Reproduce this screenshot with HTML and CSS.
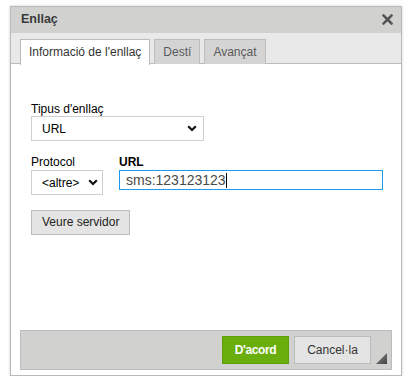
FILE: index.html
```html
<!DOCTYPE html>
<html lang="ca">
<head>
<meta charset="utf-8">
<title>Enllaç</title>
<link rel="stylesheet" href="styles.css">
</head>
<body>
<div class="dialog">
  <div class="title">
    <span class="title-text">Enllaç</span>
    <svg class="close" width="11" height="11" viewBox="0 0 11 11" aria-label="Tanca">
      <path d="M1.5 1.5 L9.5 9.5 M9.5 1.5 L1.5 9.5" stroke="#5c5c5c" stroke-width="2.6" stroke-linecap="square"/>
      <path d="M2.5 2.5 L8.5 8.5 M8.5 2.5 L2.5 8.5" stroke="#444" stroke-width="1"/>
    </svg>
  </div>
  <div class="tabs">
    <div class="tab active">Informació de l'enllaç</div>
    <div class="tab">Destí</div>
    <div class="tab">Avançat</div>
  </div>
  <div class="content">
    <div class="field">
      <label class="label">Tipus d'enllaç</label>
      <div class="select wide">
        <span class="select-text">URL</span>
        <svg class="chev" width="10" height="7" viewBox="0 0 10 7"><path d="M1.2 1.2 L5 5 L8.8 1.2" fill="none" stroke="#111" stroke-width="2.2"/></svg>
      </div>
    </div>
    <div class="row">
      <div class="field">
        <label class="label">Protocol</label>
        <div class="select narrow">
          <span class="select-text">&lt;altre&gt;</span>
          <svg class="chev" width="10" height="7" viewBox="0 0 10 7"><path d="M1.2 1.2 L5 5 L8.8 1.2" fill="none" stroke="#111" stroke-width="2.2"/></svg>
        </div>
      </div>
      <div class="field url">
        <label class="label bold">URL</label>
        <div class="input"><span class="input-text">sms:123123123</span><span class="caret"></span></div>
      </div>
    </div>
    <div class="btn-browse">Veure servidor</div>
  </div>
  <div class="footer">
    <div class="btn ok">D'acord</div>
    <div class="btn cancel">Cancel·la</div>
    <svg class="grip" width="11" height="11" viewBox="0 0 11 11">
      <defs><linearGradient id="g" x1="0" y1="0" x2="1" y2="1"><stop offset="0" stop-color="#8a8a8a"/><stop offset="1" stop-color="#444"/></linearGradient></defs>
      <polygon points="11,0 11,11 0,11" fill="url(#g)"/>
    </svg>
  </div>
</div>
</body>
</html>
```
FILE: styles.css
```css
html, body {
  margin: 0;
  padding: 0;
  background: #fff;
}
body {
  font-family: "Liberation Sans", Arial, sans-serif;
  font-size: 12px;
  color: #333;
}
.dialog {
  margin: 6px 0 0 10px;
  width: 390px;
  height: 368px;
  border: 1px solid #b9b9b9;
  box-shadow: 0 0 3px rgba(0, 0, 0, 0.18);
  display: flex;
  flex-direction: column;
  background: #fff;
}
.title {
  height: 26px;
  flex: none;
  background: #d1d2cf;
  display: flex;
  align-items: center;
  justify-content: space-between;
  padding: 0 8px 0 10px;
}
.title-text {
  font-weight: bold;
  font-size: 12.5px;
  color: #3a3a3a;
  position: relative;
  top: -1px;
}
.close {
  display: block;
  position: relative;
  top: -1px;
}
.tabs {
  height: 24px;
  flex: none;
  background: #e9e9e9;
  border-bottom: 1px solid #bcbcbc;
  padding: 6px 0 0 9px;
  box-sizing: content-box;
  display: flex;
  gap: 4px;
  align-items: flex-start;
}
.tab {
  height: 24px;
  line-height: 24px;
  margin-bottom: -1px;
  padding: 0 8px;
  border: 1px solid #bcbcbc;
  border-bottom: none;
  background: #d4d4d4;
  color: #5a5a5a;
  white-space: nowrap;
}
.tab.active {
  background: #fff;
  color: #333;
  height: 25px;
}
.content {
  flex: 1;
  padding: 38px 20px 0 20px;
}
.field {
  display: flex;
  flex-direction: column;
}
.label {
  line-height: 14px;
  color: #000;
  margin-bottom: 0;
}
.bold {
  font-weight: bold;
}
.select {
  box-sizing: border-box;
  height: 25px;
  border: 1px solid #cfcfcf;
  background: #fff;
  display: flex;
  align-items: center;
  justify-content: space-between;
  padding: 0 6px 0 10px;
  color: #000;
}
.select.wide {
  width: 173px;
}
.select.narrow {
  width: 72px;
  padding-right: 4px;
}
.select-text {
  font-size: 12px;
}
.chev {
  display: block;
}
.row {
  margin-top: 14px;
  display: flex;
  gap: 16px;
}
.row .label {
  margin-bottom: 1px;
}
.input {
  box-sizing: border-box;
  width: 264px;
  height: 20px;
  border: 1px solid #1e9bea;
  padding: 0 0 0 6px;
  display: flex;
  align-items: center;
  font-size: 14px;
  color: #4a4a4a;
}
.caret {
  display: inline-block;
  width: 1px;
  height: 15px;
  background: #000;
}
.btn-browse {
  box-sizing: border-box;
  margin-top: 15px;
  width: 99px;
  height: 25px;
  line-height: 23px;
  border: 1px solid #bcbcbc;
  background: #e4e4e4;
  color: #222;
  padding-left: 10px;
}
.footer {
  position: relative;
  flex: none;
  margin: 0 9px 5px 9px;
  border: 1px solid #bcbcbc;
  background: #d1d2cf;
  display: flex;
  justify-content: flex-end;
  align-items: flex-start;
  gap: 5px;
  padding: 5px 20px 0 0;
  box-sizing: border-box;
  height: 40px;
}
.btn {
  box-sizing: border-box;
  height: 28px;
  line-height: 26px;
  text-align: center;
  font-size: 12px;
}
.ok {
  width: 67px;
  background: #69ae0c;
  border: 1px solid #5f9f0a;
  color: #fff;
  font-weight: bold;
  letter-spacing: -0.4px;
}
.cancel {
  width: 77px;
  background: #e4e4e4;
  border: 1px solid #bcbcbc;
  color: #333;
}
.grip {
  position: absolute;
  right: 4px;
  bottom: 5px;
  display: block;
}
```
